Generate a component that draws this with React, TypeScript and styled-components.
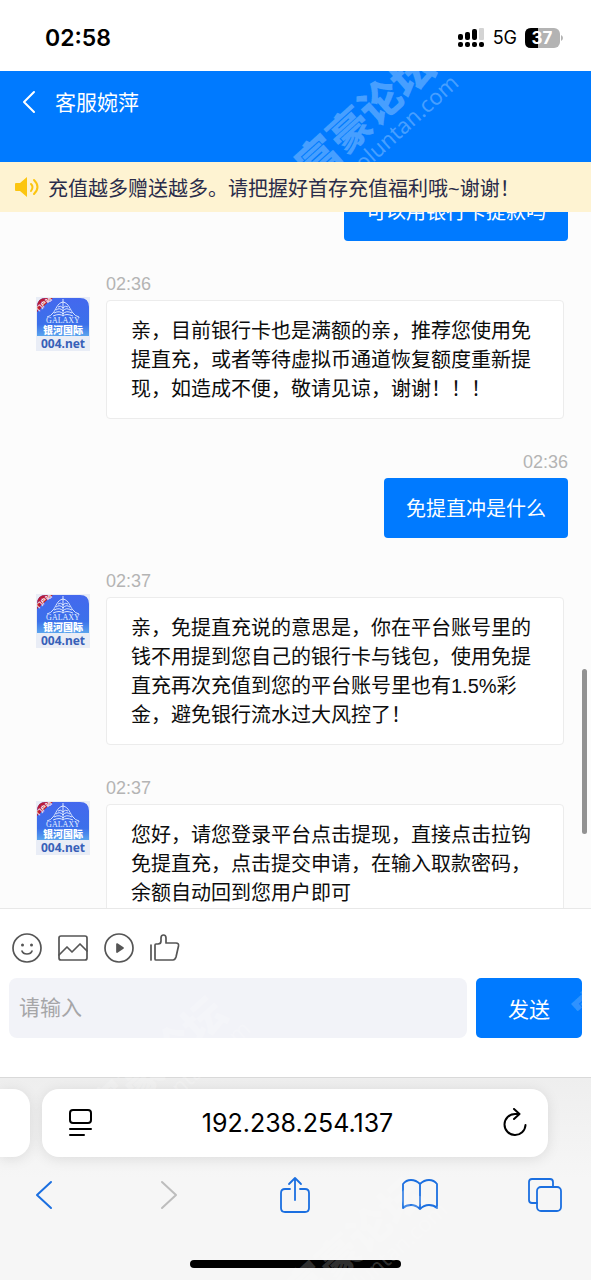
import React from "react";
import styled, { createGlobalStyle } from "styled-components";

const GlobalStyle = createGlobalStyle`
  *, *::before, *::after { box-sizing: border-box; }
  body { margin: 0; background: #fff; }
  button { border: 0; margin: 0; padding: 0; background: none; color: inherit; font: inherit; cursor: pointer; }
  svg { display: block; flex: none; }
`;

const BLUE = "#007aff";
const CHAT_FONT = '"Liberation Sans", "Noto Sans CJK SC", sans-serif';
const SYSTEM_FONT = 'Inter, "Noto Sans CJK SC", sans-serif';

const Page = styled.div`
  position: relative;
  display: flex;
  flex-direction: column;
  height: 100vh;
  overflow: hidden;
  font-family: ${CHAT_FONT};
  font-size: 20px;
  background: #fcfcfc;
`;

const StatusBar = styled.div`
  display: flex;
  flex: none;
  align-items: center;
  justify-content: space-between;
  height: 71px;
  padding: 4px 28px 0 45px;
  background: #fff;
  font-family: ${SYSTEM_FONT};
  color: #000;
`;

const Clock = styled.time`
  font-size: 23px;
  font-weight: 600;
`;

const StatusIcons = styled.div`
  display: flex;
  align-items: center;
  gap: 8px;
  font-size: 18px;
`;

const Header = styled.header`
  position: relative;
  flex: none;
  height: 91px;
  overflow: hidden;
  background: ${BLUE};
  color: #fff;
`;

const HeaderRow = styled.div`
  display: flex;
  align-items: center;
  gap: 15px;
  height: 64px;
  padding-left: 18px;
`;

const Title = styled.h1`
  margin: 0;
  font-size: 21px;
  font-weight: 400;
  line-height: 32px;
`;

const Notice = styled.div`
  display: flex;
  flex: none;
  align-items: center;
  gap: 8px;
  height: 50px;
  padding-left: 14px;
  background: #fef3d2;
  color: #2a2c4a;
  white-space: nowrap;
`;

const Chat = styled.main`
  position: relative;
  flex: 1;
  min-height: 0;
  overflow: hidden;
`;

const MessageList = styled.div`
  display: flex;
  flex-direction: column;
  gap: 31px;
  margin-top: -59px;
`;

const ScrollThumb = styled.div`
  position: absolute;
  top: 457px;
  right: 4px;
  width: 5px;
  height: 165px;
  border-radius: 3px;
  background: #929292;
`;

const AgentRow = styled.article`
  display: flex;
  align-items: flex-start;
  gap: 16px;
  padding: 0 27px 0 36px;
`;

const AvatarBox = styled.div`
  margin-top: 25px;
`;

const AgentBody = styled.div`
  flex: 1;
  min-width: 0;
`;

const UserRow = styled.article`
  display: flex;
  flex-direction: column;
  align-items: flex-end;
  padding-right: 23px;
`;

const Stamp = styled.time`
  display: block;
  height: 28px;
  font-size: 18px;
  line-height: 25px;
  color: #b4b4b4;
`;

const Bubble = styled.p<{ $own?: boolean }>`
  margin: 0;
  padding: ${(p) => (p.$own ? "17px 22px 14px" : "16px 30px 14px 24px")};
  border: ${(p) => (p.$own ? "0" : "1px solid #ececec")};
  border-radius: 4px;
  background: ${(p) => (p.$own ? BLUE : "#fff")};
  color: ${(p) => (p.$own ? "#fff" : "#0c0c0c")};
  line-height: 29px;
`;

const Composer = styled.form`
  flex: none;
  padding: 24px 9px 39px;
  border-top: 1px solid #e8e8e8;
  background: #fff;
`;

const Tools = styled.div`
  display: flex;
  gap: 16px;
  margin: 0 3px 15px;
  color: #555;
`;

const EntryRow = styled.div`
  display: flex;
  gap: 9px;
`;

const Entry = styled.input`
  flex: 1;
  min-width: 0;
  height: 60px;
  padding: 0 10px;
  border: 0;
  border-radius: 8px;
  outline: 0;
  background: #f2f3f8;
  font-family: ${CHAT_FONT};
  font-size: 21px;
  color: #222;
  &::placeholder { color: #a6a6a8; opacity: 1; }
`;

const Send = styled.button`
  width: 106px;
  height: 60px;
  border-radius: 5px;
  background: ${BLUE};
  color: #fff;
  font-size: 21px;
`;

const Browser = styled.footer`
  flex: none;
  padding-top: 11px;
  border-top: 1px solid #d9d9d9;
  background: linear-gradient(#eeeeee, #f6f6f6 50%);
  font-family: ${SYSTEM_FONT};
`;

const TabStrip = styled.div`
  display: flex;
  gap: 12px;
  padding-right: 43px;
`;

const PreviousTab = styled.div`
  width: 30px;
  height: 68px;
  border-radius: 0 17px 17px 0;
  background: #fff;
  box-shadow: 0 2px 14px rgba(0, 0, 0, 0.1);
`;

const AddressBar = styled.div`
  display: flex;
  flex: 1;
  align-items: center;
  justify-content: space-between;
  height: 68px;
  padding: 0 18px 0 23px;
  border-radius: 17px;
  background: #fff;
  box-shadow: 0 2px 14px rgba(0, 0, 0, 0.1);
  font-size: 25px;
  color: #000;
`;

const Toolbar = styled.nav`
  display: flex;
  align-items: center;
  justify-content: space-between;
  height: 76px;
  padding: 0 26px 0 24px;
`;

const ToolbarButton = styled.button`
  display: flex;
  justify-content: center;
  width: 40px;
  color: #1b6fe0;
  &:disabled { color: #bdbdbd; }
`;

const HomeIndicator = styled.div`
  width: 211px;
  height: 8px;
  margin: 27px auto 12px;
  border-radius: 4px;
  background: #000;
`;

const Mark = styled.div<{ $x: number; $y: number; $faint?: boolean }>`
  position: absolute;
  left: ${(p) => p.$x}px;
  top: ${(p) => p.$y}px;
  width: 180px;
  padding-right: 8px;
  transform: rotate(-42deg);
  color: rgba(255, 255, 255, ${(p) => (p.$faint ? 0.2 : 0.28)});
  font-family: "Noto Sans", "Noto Sans CJK SC", sans-serif;
  font-size: 22px;
  line-height: 22px;
  text-align: right;
  white-space: nowrap;
  pointer-events: none;
`;

const MarkTitle = styled.strong`
  display: block;
  font-size: 42px;
  font-weight: 900;
  line-height: 42px;
  text-align: center;
`;

function Watermark(props: { x: number; y: number; faint?: boolean }) {
  return (
    <Mark $x={props.x} $y={props.y} $faint={props.faint} aria-hidden="true">
      <MarkTitle>富豪论坛</MarkTitle>
      fuhaoluntan.com
    </Mark>
  );
}

function Avatar({ id }: { id: string }) {
  return (
    <svg width="54" height="54" viewBox="0 0 54 54" role="img" aria-label="银河国际 004.net">
      <defs>
        <linearGradient id={`${id}-sky`} x1="0" y1="0" x2="0" y2="1">
          <stop offset="0" stopColor="#4468ee" />
          <stop offset="0.7" stopColor="#3b70ea" />
          <stop offset="1" stopColor="#5aa4ee" />
        </linearGradient>
        <clipPath id={`${id}-clip`}>
          <path d="M1 39V10Q1 1 10 1H44Q53 1 53 10V39Z" />
        </clipPath>
      </defs>
      <rect width="54" height="54" fill="#e9edf6" />
      <g clipPath={`url(#${id}-clip)`}>
        <rect width="54" height="39" fill={`url(#${id}-sky)`} />
        <path d="M0 0H18L0 16Z" fill="#b91c38" />
        <text x="8" y="9" textAnchor="middle" transform="rotate(-42 8 7)" fontSize="6" fontWeight="700" fill="#fff" fontFamily="Noto Sans CJK SC">门户站</text>
        <g fill="none" stroke="#eaf2ff" strokeWidth="0.9">
          <path d="M27 2V6M27 5C21 6 20 13 17 16Q15 19 11 20M27 5C33 6 34 13 37 16Q39 19 43 20" />
          <path d="M22 10Q25 8 27 11Q29 8 32 10M20 13Q24 10 27 14Q30 10 34 13M18 16Q24 13 27 17Q30 13 36 16M17 19Q24 16 27 19Q30 16 37 19M27 6V19" />
        </g>
        <text x="27" y="26" textAnchor="middle" fontSize="8" fill="#e6efff" fontFamily="Liberation Serif">GALAXY</text>
        <text x="27" y="37" textAnchor="middle" fontSize="10" fontWeight="900" fill="#fff" fontFamily="Noto Sans CJK SC">银河国际</text>
      </g>
      <text x="27" y="51" textAnchor="middle" fontSize="12" fontWeight="700" fill="#3760b8" fontFamily="Noto Sans">004.net</text>
    </svg>
  );
}

function AgentMessage(props: { id: string; time: string; text: string }) {
  return (
    <AgentRow>
      <AvatarBox><Avatar id={props.id} /></AvatarBox>
      <AgentBody>
        <Stamp>{props.time}</Stamp>
        <Bubble>{props.text}</Bubble>
      </AgentBody>
    </AgentRow>
  );
}

function UserMessage(props: { time: string; text: string }) {
  return (
    <UserRow>
      <Stamp>{props.time}</Stamp>
      <Bubble $own>{props.text}</Bubble>
    </UserRow>
  );
}

const line = { fill: "none", stroke: "currentColor", strokeLinecap: "round", strokeLinejoin: "round" } as const;

export default function App() {
  return (
    <Page>
      <GlobalStyle />
      <StatusBar>
        <Clock>02:58</Clock>
        <StatusIcons>
          <svg width="27" height="20" viewBox="0 0 27 20" aria-label="信号">
            <rect x="0" y="6" width="5" height="6" rx="2" />
            <rect x="7" y="4" width="5" height="8" rx="2" />
            <rect x="14" y="1" width="5" height="11" rx="2" />
            <rect x="21" y="0" width="5" height="12" rx="1" fill="#d4d4d4" />
            <rect x="0" y="14" width="5" height="5" rx="2" />
            <rect x="7" y="14" width="5" height="5" rx="2" />
            <rect x="14" y="14" width="5" height="5" rx="2" />
            <rect x="21" y="14" width="5" height="5" rx="2" />
          </svg>
          <span>5G</span>
          <svg width="38" height="20" viewBox="0 0 38 20" aria-label="电量 37%">
            <rect width="35" height="20" rx="6" fill="#b3b3b3" />
            <path d="M6 0H13V20H6Q0 20 0 14V6Q0 0 6 0Z" />
            <path d="M36 7Q38 8 38 10T36 13Z" fill="#b3b3b3" />
            <text x="17" y="16" textAnchor="middle" fontSize="17" fontWeight="700" fill="#fff" fontFamily="Inter">37</text>
          </svg>
        </StatusIcons>
      </StatusBar>

      <Header>
        <HeaderRow>
          <button type="button" aria-label="返回">
            <svg width="22" height="26" viewBox="0 0 22 26" {...line} strokeWidth="2"><path d="M16 2L6 12L16 22" /></svg>
          </button>
          <Title>客服婉萍</Title>
        </HeaderRow>
        <Watermark x={285} y={18} />
      </Header>

      <Notice>
        <svg width="26" height="20" viewBox="0 0 26 20" fill="none" stroke="#fcc510" strokeWidth="2" strokeLinecap="round">
          <path d="M2 6H6L13 0V20L6 14H2Q1 14 1 13V7Q1 6 2 6Z" fill="#fcc510" stroke="none" />
          <path d="M17 7Q20 10 17 14M20 3Q27 10 20 17" />
        </svg>
        <span>充值越多赠送越多。请把握好首存充值福利哦~谢谢！</span>
      </Notice>

      <Chat>
        <MessageList>
          <UserMessage time="02:35" text="可以用银行卡提款吗" />
          <AgentMessage id="m1" time="02:36" text="亲，目前银行卡也是满额的亲，推荐您使用免提直充，或者等待虚拟币通道恢复额度重新提现，如造成不便，敬请见谅，谢谢！！！" />
          <UserMessage time="02:36" text="免提直冲是什么" />
          <AgentMessage id="m2" time="02:37" text="亲，免提直充说的意思是，你在平台账号里的钱不用提到您自己的银行卡与钱包，使用免提直充再次充值到您的平台账号里也有1.5%彩金，避免银行流水过大风控了！" />
          <AgentMessage id="m3" time="02:37" text="您好，请您登录平台点击提现，直接点击拉钩免提直充，点击提交申请，在输入取款密码，余额自动回到您用户即可" />
        </MessageList>
        <ScrollThumb />
      </Chat>

      <Composer onSubmit={(e) => e.preventDefault()}>
        <Tools>
          <button type="button" aria-label="表情">
            <svg width="30" height="30" viewBox="0 0 30 30" {...line} strokeWidth="1.7">
              <circle cx="15" cy="15" r="14" />
              <path d="M10 18Q11 21 15 21T20 18" />
              <circle cx="10.500" cy="12" r="1.500" fill="currentColor" stroke="none" />
              <circle cx="19.500" cy="12" r="1.500" fill="currentColor" stroke="none" />
            </svg>
          </button>
          <button type="button" aria-label="图片">
            <svg width="30" height="30" viewBox="0 0 30 30" {...line} strokeWidth="1.700">
              <rect x="1" y="3" width="28" height="24" rx="2" />
              <path d="M1 22L9 14L14 19L22 11L29 18" />
            </svg>
          </button>
          <button type="button" aria-label="视频">
            <svg width="30" height="30" viewBox="0 0 30 30" {...line} strokeWidth="1.700">
              <circle cx="15" cy="15" r="14" />
              <path d="M13 11L19 15L13 19Z" fill="currentColor" />
            </svg>
          </button>
          <button type="button" aria-label="评价">
            <svg width="30" height="30" viewBox="0 0 30 30" {...line} strokeWidth="1.700">
              <path d="M1 12V27M5 12Q5 11 6 11H8Q11 11 11 8V5Q11 2 13.500 2T16 5V10H26Q29 10 28.500 13L26 24Q25 27 23 27H6Q5 27 5 26Z" />
            </svg>
          </button>
        </Tools>
        <EntryRow>
          <Entry type="text" placeholder="请输入" aria-label="请输入" />
          <Send type="submit">发送</Send>
        </EntryRow>
      </Composer>

      <Browser>
        <TabStrip>
          <PreviousTab />
          <AddressBar>
            <button type="button" aria-label="页面菜单">
              <svg width="30" height="30" viewBox="0 0 30 30" {...line} strokeWidth="2">
                <rect x="5" y="2" width="21" height="13" rx="3" />
                <path d="M5 21H26M5 27H19" />
              </svg>
            </button>
            <span>192.238.254.137</span>
            <button type="button" aria-label="刷新">
              <svg width="30" height="30" viewBox="0 0 30 30" {...line} strokeWidth="2">
                <path d="M19 6H15A10.500 10.500 0 1 0 25.500 17M14 1L19.500 6L14 11" />
              </svg>
            </button>
          </AddressBar>
        </TabStrip>
        <Toolbar aria-label="浏览器">
          <ToolbarButton type="button" aria-label="后退">
            <svg width="20" height="30" viewBox="0 0 20 30" {...line} strokeWidth="2"><path d="M17 2L3 15L17 28" /></svg>
          </ToolbarButton>
          <ToolbarButton type="button" aria-label="前进" disabled>
            <svg width="20" height="30" viewBox="0 0 20 30" {...line} strokeWidth="2"><path d="M3 2L17 15L3 28" /></svg>
          </ToolbarButton>
          <ToolbarButton type="button" aria-label="分享">
            <svg width="30" height="38" viewBox="0 0 30 38" {...line} strokeWidth="1.800">
              <path d="M10 13H5Q1 13 1 17V32Q1 36 5 36H25Q29 36 29 32V17Q29 13 25 13H20M15 24V2M9 8L15 2L21 8" />
            </svg>
          </ToolbarButton>
          <ToolbarButton type="button" aria-label="书签">
            <svg width="38" height="34" viewBox="0 0 38 34" {...line} strokeWidth="1.800">
              <path d="M19 6Q15 2 10 2T2 6V30Q5 27 10 27T19 31Q23 27 28 27T36 30V6Q33 2 28 2T19 6V31" />
            </svg>
          </ToolbarButton>
          <ToolbarButton type="button" aria-label="标签页">
            <svg width="36" height="36" viewBox="0 0 36 36" {...line} strokeWidth="1.800">
              <rect x="10" y="10" width="24" height="24" rx="4" />
              <path d="M10 26H5Q2 26 2 23V5Q2 2 5 2H23Q26 2 26 5V10" />
            </svg>
          </ToolbarButton>
        </Toolbar>
        <HomeIndicator />
      </Browser>

      <Watermark x={274} y={1216} faint />
      <Watermark x={77} y={1035} faint />
      <Watermark x={563} y={936} faint />
    </Page>
  );
}
